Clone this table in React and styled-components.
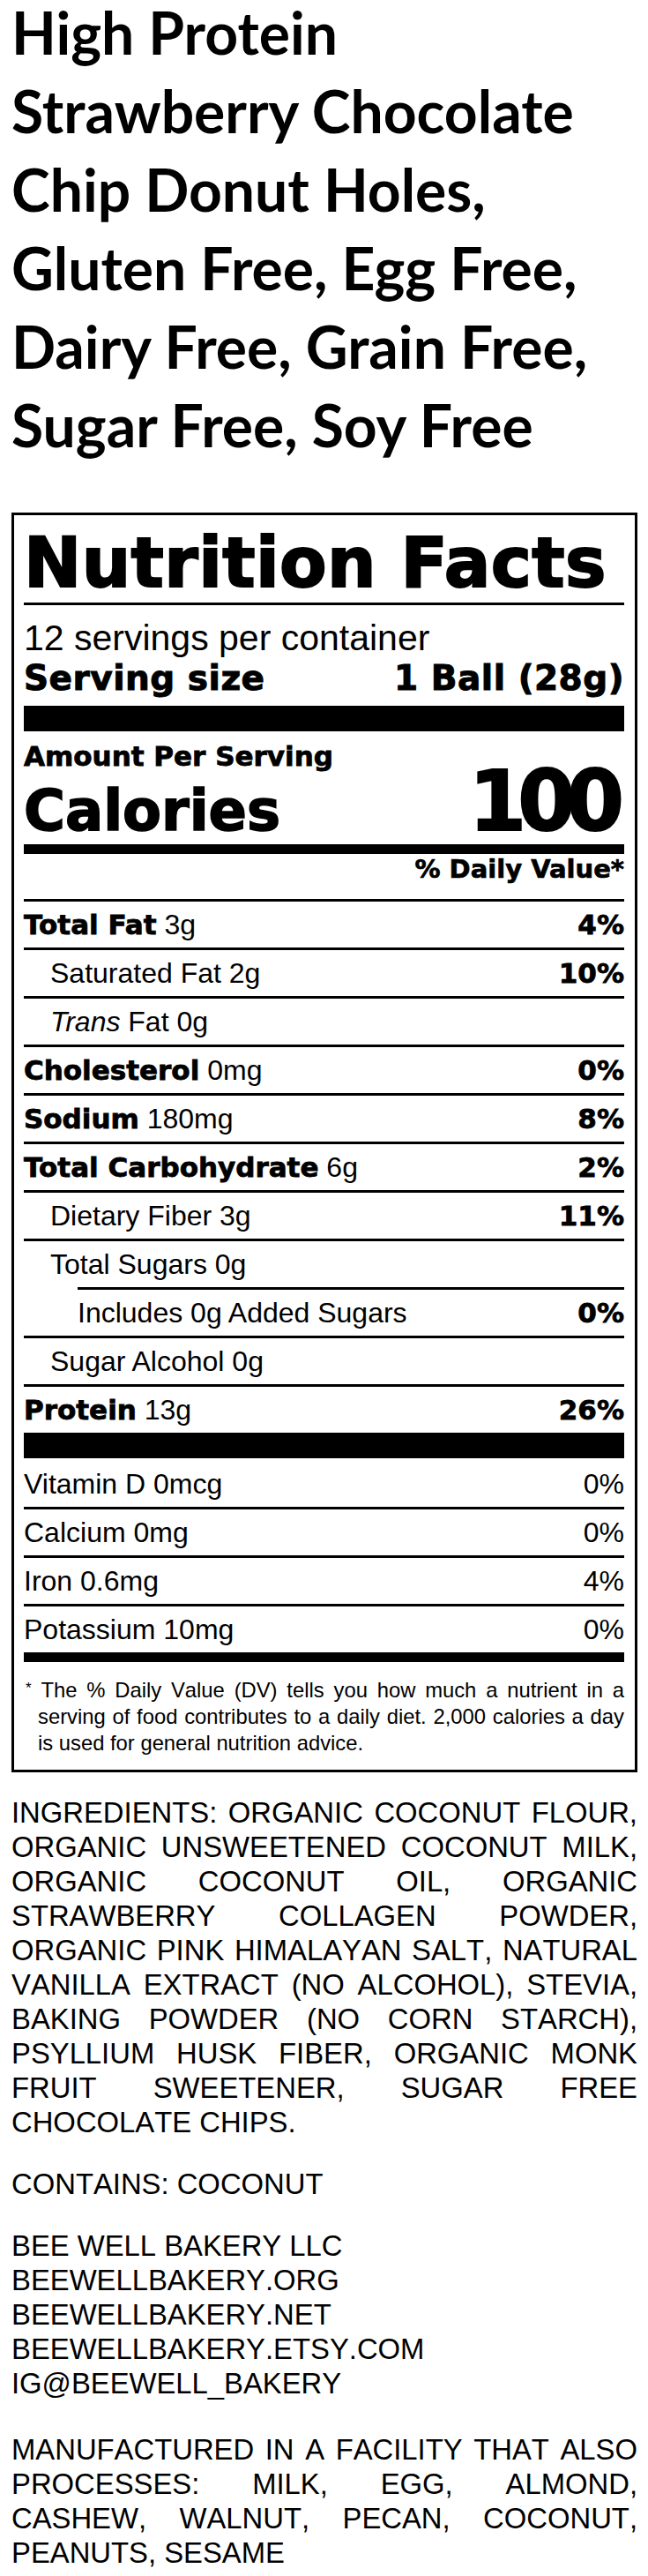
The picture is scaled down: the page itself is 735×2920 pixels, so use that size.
import styled, { createGlobalStyle } from "styled-components";

const GlobalStyle = createGlobalStyle`
  body {
    margin: 0;
    background: #fff;
    color: #000;
  }
`;

const Page = styled.div`
  padding: 0 12px 0 13px;
  font-family: "Liberation Sans", Arial, sans-serif;
`;

const Title = styled.h1`
  margin: -8px 0 55px;
  font-family: Lato, sans-serif;
  font-weight: 700;
  font-size: 66px;
  line-height: 89px;
`;

const Label = styled.section`
  border: 3px solid #000;
  padding: 0 12px 15px 11px;
`;

const Heading = styled.h2`
  margin: 15px 0 6px;
  font-family: "DejaVu Sans", sans-serif;
  font-weight: 700;
  font-size: 78px;
  line-height: 78px;
  letter-spacing: 0.4px;
  white-space: nowrap;
  -webkit-text-stroke: 2px #000;
`;

const Bar = styled.div`
  height: ${(p) => p.$h}px;
  background: #000;
`;

const Servings = styled.div`
  margin-top: 14px;
  font-size: 41px;
  line-height: 46px;
`;

const SizeRow = styled.div`
  display: flex;
  justify-content: space-between;
  margin: 3px 0 11px;
  font-family: "DejaVu Sans", sans-serif;
  font-weight: 700;
  font-size: 39px;
  line-height: 40px;
  letter-spacing: 0.5px;
  -webkit-text-stroke: 1px #000;
`;

const Amount = styled.div`
  margin-top: 11px;
  font-family: "DejaVu Sans", sans-serif;
  font-weight: 700;
  font-size: 31px;
  line-height: 34px;
  -webkit-text-stroke: 0.8px #000;
`;

const CaloriesRow = styled.div`
  display: flex;
  justify-content: space-between;
  align-items: baseline;
  margin-bottom: 6px;
  font-family: "DejaVu Sans", sans-serif;
  font-weight: 700;
`;

const CaloriesLabel = styled.span`
  font-size: 64px;
  line-height: 64px;
  -webkit-text-stroke: 1.6px #000;
`;

const CaloriesValue = styled.span`
  font-size: 94px;
  line-height: 69px;
  letter-spacing: -10px;
  margin-right: 10px;
  -webkit-text-stroke: 2px #000;
`;

const DailyHead = styled.div`
  padding-bottom: 17px;
  text-align: right;
  font-family: "DejaVu Sans", sans-serif;
  font-weight: 700;
  font-size: 29px;
  line-height: 34px;
  -webkit-text-stroke: 0.7px #000;
`;

const Row = styled.div`
  display: flex;
  justify-content: space-between;
  height: 52px;
  margin-left: ${(p) => p.$offset || 0}px;
  padding-left: ${(p) => p.$indent || 0}px;
  border-top: 3px solid ${(p) => (p.$first ? "transparent" : "#000")};
  font-size: 32px;
  line-height: 52px;
  white-space: nowrap;
`;

const Strong = styled.span`
  font-family: "DejaVu Sans", sans-serif;
  font-weight: 700;
  font-size: 31px;
  -webkit-text-stroke: 0.8px #000;
`;

const Pct = styled.span`
  font-family: ${(p) =>
    p.$bold ? `"DejaVu Sans", sans-serif` : `"Liberation Sans", Arial, sans-serif`};
  font-weight: ${(p) => (p.$bold ? 700 : 400)};
  font-size: ${(p) => (p.$bold ? 31 : 32)}px;
  -webkit-text-stroke: ${(p) => (p.$bold ? "0.8px #000" : "0")};
`;

const Footnote = styled.p`
  margin: 17px 0 0;
  padding-left: 16px;
  text-indent: -14px;
  font-size: 23.8px;
  line-height: 30px;
  text-align: justify;
  font-kerning: none;
`;

const Star = styled.span`
  font-size: 17px;
  vertical-align: top;
  line-height: 26px;
`;

const Info = styled.p`
  margin: ${(p) => p.$gap}px 0 0;
  font-size: 32.8px;
  line-height: 39px;
  text-align: justify;
  font-kerning: none;
`;

const nutrients = [
  { name: "Total Fat", amount: "3g", dv: "4%", bold: true },
  { name: "Saturated Fat", amount: "2g", dv: "10%", indent: 30 },
  { name: "Trans", amount: "Fat 0g", italic: true, indent: 30 },
  { name: "Cholesterol", amount: "0mg", dv: "0%", bold: true },
  { name: "Sodium", amount: "180mg", dv: "8%", bold: true },
  { name: "Total Carbohydrate", amount: "6g", dv: "2%", bold: true },
  { name: "Dietary Fiber", amount: "3g", dv: "11%", indent: 30 },
  { name: "Total Sugars", amount: "0g", indent: 30 },
  { name: "Includes 0g Added Sugars", amount: "", dv: "0%", offset: 61 },
  { name: "Sugar Alcohol", amount: "0g", indent: 30 },
  { name: "Protein", amount: "13g", dv: "26%", bold: true },
];

const vitamins = [
  { name: "Vitamin D 0mcg", dv: "0%" },
  { name: "Calcium 0mg", dv: "0%" },
  { name: "Iron 0.6mg", dv: "4%" },
  { name: "Potassium 10mg", dv: "0%" },
];

function NutrientName({ item }) {
  if (item.bold) {
    return (
      <span>
        <Strong>{item.name}</Strong> {item.amount}
      </span>
    );
  }
  if (item.italic) {
    return (
      <span>
        <i>{item.name}</i> {item.amount}
      </span>
    );
  }
  return (
    <span>
      {item.name}
      {item.amount ? ` ${item.amount}` : ""}
    </span>
  );
}

export default function App() {
  return (
    <Page>
      <GlobalStyle />
      <Title>
        High Protein Strawberry Chocolate Chip Donut Holes, Gluten Free, Egg
        Free, Dairy Free, Grain Free, Sugar Free, Soy Free
      </Title>

      <Label>
        <Heading>Nutrition Facts</Heading>
        <Bar $h={3} />
        <Servings>12 servings per container</Servings>
        <SizeRow>
          <span>Serving size</span>
          <span>1 Ball (28g)</span>
        </SizeRow>
        <Bar $h={29} />
        <Amount>Amount Per Serving</Amount>
        <CaloriesRow>
          <CaloriesLabel>Calories</CaloriesLabel>
          <CaloriesValue>100</CaloriesValue>
        </CaloriesRow>
        <Bar $h={11} />
        <DailyHead>% Daily Value*</DailyHead>

        {nutrients.map((item) => (
          <Row key={item.name} $indent={item.indent} $offset={item.offset}>
            <NutrientName item={item} />
            {item.dv && <Pct $bold>{item.dv}</Pct>}
          </Row>
        ))}

        <Bar $h={29} />

        {vitamins.map((item, i) => (
          <Row key={item.name} $first={i === 0}>
            <span>{item.name}</span>
            <Pct>{item.dv}</Pct>
          </Row>
        ))}

        <Bar $h={11} />
        <Footnote>
          <Star>*</Star> The % Daily Value (DV) tells you how much a nutrient
          in a serving of food contributes to a daily diet. 2,000 calories a
          day is used for general nutrition advice.
        </Footnote>
      </Label>

      <Info $gap={26}>
        INGREDIENTS: ORGANIC COCONUT FLOUR, ORGANIC UNSWEETENED COCONUT MILK,
        ORGANIC COCONUT OIL, ORGANIC STRAWBERRY COLLAGEN POWDER, ORGANIC PINK
        HIMALAYAN SALT, NATURAL VANILLA EXTRACT (NO ALCOHOL), STEVIA, BAKING
        POWDER (NO CORN STARCH), PSYLLIUM HUSK FIBER, ORGANIC MONK FRUIT
        SWEETENER, SUGAR FREE CHOCOLATE CHIPS.
      </Info>
      <Info $gap={31}>CONTAINS: COCONUT</Info>
      <Info $gap={31}>
        BEE WELL BAKERY LLC
        <br />
        BEEWELLBAKERY.ORG
        <br />
        BEEWELLBAKERY.NET
        <br />
        BEEWELLBAKERY.ETSY.COM
        <br />
        IG@BEEWELL_BAKERY
      </Info>
      <Info $gap={36}>
        MANUFACTURED IN A FACILITY THAT ALSO PROCESSES: MILK, EGG, ALMOND,
        CASHEW, WALNUT, PECAN, COCONUT, PEANUTS, SESAME
      </Info>
    </Page>
  );
}
